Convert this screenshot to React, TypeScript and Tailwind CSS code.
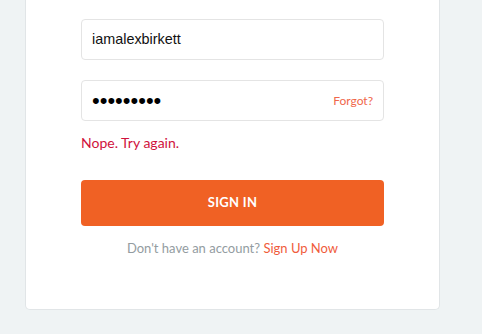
export default function App() {
  return (
    <div className="min-h-[334px] bg-[#eff3f4] font-['Lato',sans-serif]">
      <div className="ml-[25px] w-[415px] border-x border-b border-[#e1e5e7] bg-white rounded-b-[5px] px-[55px] pt-[19px] pb-[51px] flex flex-col">
        <div className="h-[41px] rounded-[4px] border border-[#e4e4e4] flex items-center pl-[10px] font-['Liberation_Sans',sans-serif] text-[14.4px] text-[#111]">
          iamalexbirkett
        </div>
        <div className="mt-[20px] h-[41px] rounded-[4px] border border-[#e4e4e4] flex items-center justify-between pl-[10px] pr-[10px]">
          <span className="font-['Liberation_Sans',sans-serif] text-[22px] leading-none text-black">•••••••••</span>
          <span className="text-[12px] text-[#f0674a]">Forgot?</span>
        </div>
        <p className="mt-[12px] text-[14px] leading-[20px] text-[#d0123c]">Nope. Try again.</p>
        <button className="mt-[27px] h-[46px] rounded-[4px] bg-[#f06124] text-white text-[13px] font-bold tracking-[0.3px]">
          SIGN IN
        </button>
        <p className="mt-[12px] text-center text-[13px] leading-[20px] text-[#939ca1]">
          Don't have an account? <span className="text-[#f05c3c]">Sign Up Now</span>
        </p>
      </div>
    </div>
  )
}
